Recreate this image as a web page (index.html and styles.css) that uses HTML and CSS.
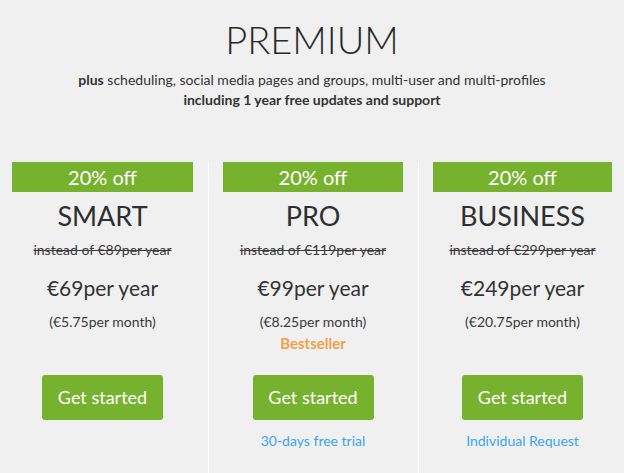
FILE: index.html
```html
<!DOCTYPE html>
<html lang="en">
<head>
<meta charset="utf-8">
<title>Premium</title>
<link rel="stylesheet" href="styles.css">
</head>
<body>
<header class="intro">
  <h1 class="title">PREMIUM</h1>
  <p class="sub"><b>plus</b> scheduling, social media pages and groups, multi-user and multi-profiles</p>
  <p class="sub strong">including 1 year free updates and support</p>
</header>
<section class="plans">
  <div class="plan plan-first">
    <div class="badge">20% off</div>
    <div class="name">SMART</div>
    <div class="old">instead of €89per year</div>
    <div class="price">€69per year</div>
    <div class="month">(€5.75per month)</div>
    <div class="tag"></div>
    <a class="btn" href="#">Get started</a>
    <div class="link"></div>
  </div>
  <div class="plan plan-mid">
    <div class="badge">20% off</div>
    <div class="name">PRO</div>
    <div class="old">instead of €119per year</div>
    <div class="price">€99per year</div>
    <div class="month">(€8.25per month)</div>
    <div class="tag">Bestseller</div>
    <a class="btn" href="#">Get started</a>
    <a class="link" href="#">30-days free trial</a>
  </div>
  <div class="plan plan-last">
    <div class="badge">20% off</div>
    <div class="name">BUSINESS</div>
    <div class="old">instead of €299per year</div>
    <div class="price">€249per year</div>
    <div class="month">(€20.75per month)</div>
    <div class="tag"></div>
    <a class="btn" href="#">Get started</a>
    <a class="link" href="#">Individual Request</a>
  </div>
</section>
</body>
</html>
```
FILE: styles.css
```css
html, body {
  margin: 0;
  padding: 0;
  background: #f0f0f0;
  height: 100%;
  overflow: hidden;
}
body {
  font-family: Lato, "Open Sans", sans-serif;
  color: #333;
}
.intro {
  text-align: center;
  padding-top: 16px;
}
.title {
  margin: 0;
  font-size: 38px;
  line-height: 46px;
  font-weight: 300;
  color: #2a2a2a;
}
.sub {
  margin: 0;
  font-size: 14px;
  line-height: 20px;
  color: #333;
}
.intro .title + .sub { margin-top: 8px; }
.sub b, .sub.strong { font-weight: 700; }
.plans {
  display: grid;
  grid-template-columns: 196px 210px 194px;
  padding: 0 12px;
  margin-top: 52px;
}
.plan {
  display: flex;
  flex-direction: column;
  align-items: center;
  text-align: center;
  min-height: 320px;
}
.plan-first { padding-right: 15px; }
.plan-mid { border-left: 1px solid #fff; padding-left: 14px; padding-right: 15px; }
.plan-last { border-left: 1px solid #fff; padding-left: 14px; }
.badge {
  align-self: stretch;
  background: #77b22f;
  color: #fff;
  font-size: 20px;
  line-height: 30px;
  height: 30px;
}
.name {
  margin-top: 7px;
  font-size: 27px;
  line-height: 34px;
  color: #2f2f2f;
}
.old {
  margin-top: 7px;
  font-size: 14px;
  line-height: 20px;
  text-decoration: line-through;
  color: #3a3a3a;
}
.price {
  margin-top: 14px;
  font-size: 21px;
  line-height: 28px;
  color: #333;
}
.month {
  margin-top: 10px;
  font-size: 14px;
  line-height: 20px;
  color: #3a3a3a;
}
.tag {
  margin-top: 1px;
  height: 20px;
  font-size: 15px;
  line-height: 20px;
  font-weight: 700;
  color: #f0a04a;
}
.btn {
  margin-top: 22px;
  width: 121px;
  height: 45px;
  line-height: 45px;
  box-sizing: border-box;
  background: #77b22f;
  color: #fff;
  border-radius: 3px;
  font-size: 18px;
  text-decoration: none;
}
.link {
  margin-top: 11px;
  height: 20px;
  font-size: 14px;
  line-height: 20px;
  color: #3aa6f2;
  text-decoration: none;
}
```
